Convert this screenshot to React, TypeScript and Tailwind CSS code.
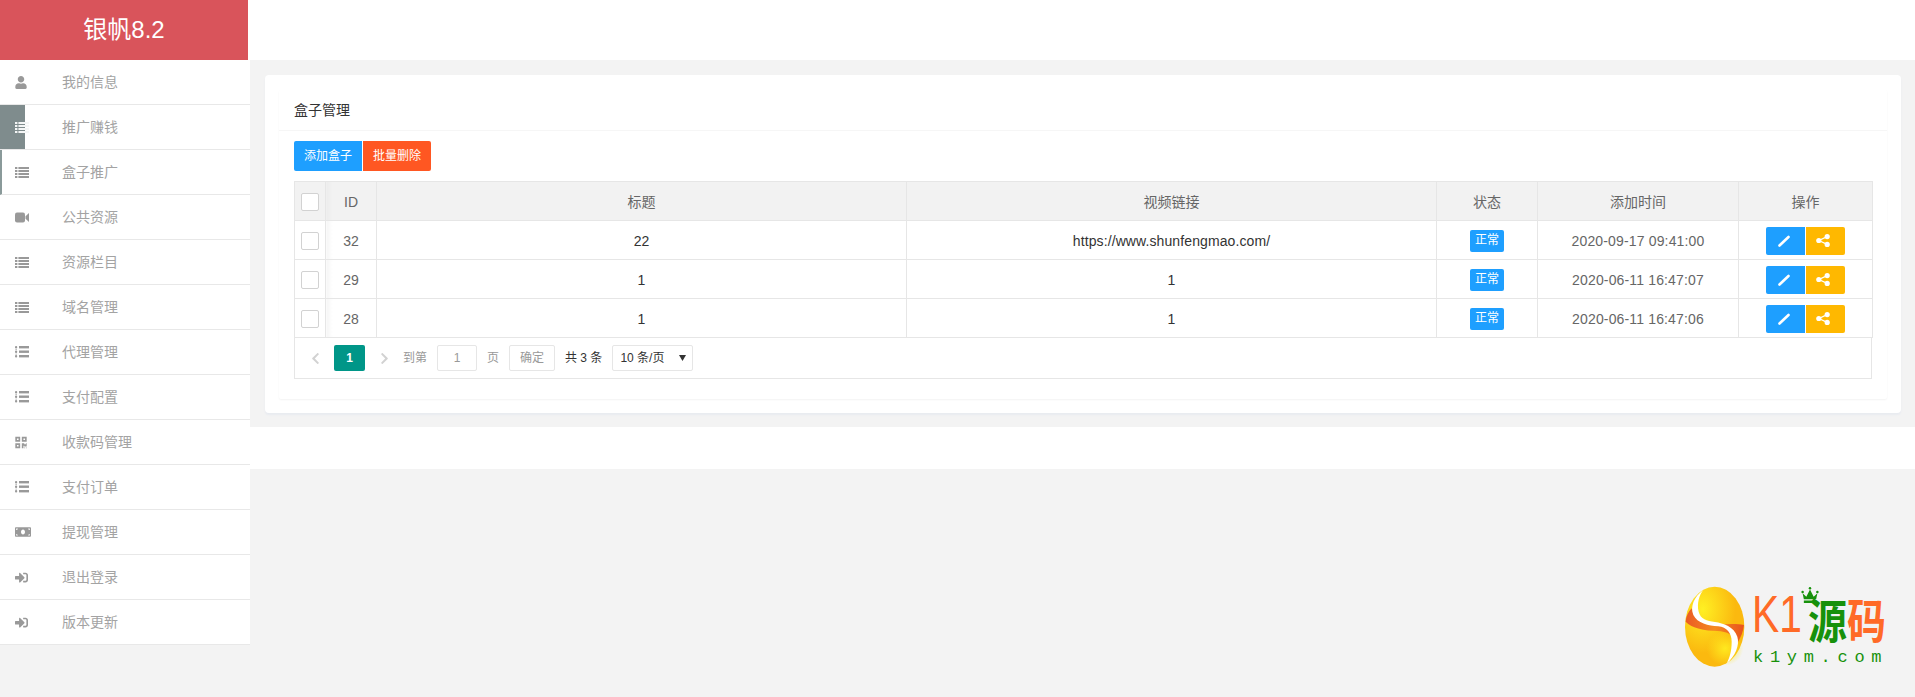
import React from "react";
import { FaUser, FaQrcode, FaMoneyBill, FaSignInAlt, FaChevronLeft, FaChevronRight } from "react-icons/fa";

const FONT = "font-['Liberation_Sans','Noto_Sans_CJK_SC',sans-serif]";

// font awesome 4 style list: four rows with small squares on the left
const ThinList = ({ className }: { className?: string }) => (
  <svg viewBox="0 0 14 11" fill="currentColor" className={`h-[11px] w-[14px] ${className ?? ""}`}>
    {[0, 3, 6, 9].map((y) => (
      <g key={y}>
        <rect x="0" y={y} width="2.4" height="2" />
        <rect x="3.4" y={y} width="10.6" height="2" />
      </g>
    ))}
  </svg>
);

const DotList = ({ className }: { className?: string }) => (
  <svg viewBox="0 0 14 12" fill="currentColor" className={`h-[12px] w-[14px] ${className ?? ""}`}>
    {[0, 4.5, 9].map((y) => (
      <g key={y}>
        <rect x="0" y={y} width="2.2" height="2.6" rx="1" />
        <rect x="4" y={y} width="10" height="2.4" />
      </g>
    ))}
    <rect x="0.6" y="3" width="1" height="1" />
    <rect x="0.6" y="7.6" width="1" height="1" />
  </svg>
);

const Camera = ({ className }: { className?: string }) => (
  <svg viewBox="0 0 14 11" fill="currentColor" className={`h-[11px] w-[14px] ${className ?? ""}`}>
    <rect x="0" y="0.5" width="10" height="10" rx="2" />
    <path d="M10.5 4.2 14 1v9l-3.5-3.2z" />
  </svg>
);

const User = ({ className }: { className?: string }) => <FaUser className={`h-[13px] w-[12px] ${className ?? ""}`} />;
const Qr = ({ className }: { className?: string }) => <FaQrcode className={`h-[13px] w-[12px] ${className ?? ""}`} />;
const Money = ({ className }: { className?: string }) => (
  <FaMoneyBill className={`h-[16px] w-[16px] ${className ?? ""}`} />
);
const SignIn = ({ className }: { className?: string }) => (
  <FaSignInAlt className={`h-[13px] w-[13px] ${className ?? ""}`} />
);

const menu = [
  { label: "我的信息", icon: User },
  { label: "推广赚钱", icon: ThinList },
  { label: "盒子推广", icon: ThinList },
  { label: "公共资源", icon: Camera },
  { label: "资源栏目", icon: ThinList },
  { label: "域名管理", icon: ThinList },
  { label: "代理管理", icon: DotList },
  { label: "支付配置", icon: DotList },
  { label: "收款码管理", icon: Qr },
  { label: "支付订单", icon: DotList },
  { label: "提现管理", icon: Money },
  { label: "退出登录", icon: SignIn },
  { label: "版本更新", icon: SignIn },
];

const rows = [
  { id: 32, title: "22", url: "https://www.shunfengmao.com/", time: "2020-09-17 09:41:00" },
  { id: 29, title: "1", url: "1", time: "2020-06-11 16:47:07" },
  { id: 28, title: "1", url: "1", time: "2020-06-11 16:47:06" },
];

const Checkbox = () => (
  <div className="mx-auto h-[18px] w-[18px] rounded-[2px] border border-[#d2d2d2] bg-white" />
);

const Sidebar = () => (
  <aside className="w-[250px] shrink-0">
    <div className="h-[60px] bg-white">
      <div className="flex h-full w-[248px] items-center justify-center bg-[#d9545b] text-2xl text-white">
        银帆8.2
      </div>
    </div>
    <ul className="bg-white">
      {menu.map((item, index) => {
        const Icon = item.icon;
        return (
          <li
            key={item.label}
            className={`relative flex h-[45px] items-center border-b border-[#e8e8e8] text-sm text-[#a3a3a3] ${
              index === 2 ? "border-l-2 border-l-[#8a9a9a] pl-[13px]" : "pl-[15px]"
            }`}
          >
            {index === 1 && <div className="absolute bottom-0 left-0 top-0 w-[25px] bg-[#7f8c8d]" />}
            <span className={`relative flex w-[47px] ${index === 1 ? "text-[#f4f6f6]" : "text-[#999999]"}`}>
              <Icon />
            </span>
            <span>{item.label}</span>
          </li>
        );
      })}
    </ul>
  </aside>
);

const Pagination = () => (
  <div className="flex h-[41px] items-center border border-t-0 border-[#e6e6e6] pl-[14px] text-xs text-[#666666]">
    <FaChevronLeft className="h-[13px] w-[13px] text-[#d2d2d2]" />
    <div className="ml-[12px] flex h-[26px] w-[31px] items-center justify-center rounded-[2px] bg-[#009688] font-bold text-white">
      1
    </div>
    <FaChevronRight className="ml-[13px] h-[13px] w-[13px] text-[#d2d2d2]" />
    <span className="ml-[12px] text-[#999999]">到第</span>
    <div className="ml-[10px] flex h-[26px] w-[40px] items-center justify-center rounded-[2px] border border-[#e6e6e6] text-[#999999]">
      1
    </div>
    <span className="ml-[10px] text-[#999999]">页</span>
    <div className="ml-[10px] flex h-[26px] w-[46px] items-center justify-center rounded-[2px] border border-[#e6e6e6] text-[#999999]">
      确定
    </div>
    <span className="ml-[10px] text-[#333333]">共 3 条</span>
    <div className="ml-[10px] flex h-[26px] w-[81px] items-center justify-between rounded-[2px] border border-[#e6e6e6] pl-[7px] pr-[5px] text-[#333333]">
      <span>10 条/页</span>
      <svg viewBox="0 0 8 6" className="h-[6px] w-[8px]">
        <path d="M0 0h7L3.5 6z" fill="#333333" />
      </svg>
    </div>
  </div>
);

const BoxTable = () => {
  const cell = "border border-[#e6e6e6] p-0 pt-px text-center";
  const idCell = `${cell} bg-[linear-gradient(90deg,#f5f5f5,#ffffff_6px)]`;
  return (
    <div>
      <table className="w-[1578px] table-fixed border-collapse text-sm text-[#666666]">
        <colgroup>
          <col className="w-[31px]" />
          <col className="w-[51px]" />
          <col className="w-[530px]" />
          <col className="w-[530px]" />
          <col className="w-[101px]" />
          <col className="w-[201px]" />
          <col className="w-[134px]" />
        </colgroup>
        <thead>
          <tr className="h-[39px] bg-[#f2f2f2]">
            <th className={`${cell} font-normal`}>
              <Checkbox />
            </th>
            <th className={`${cell} bg-[linear-gradient(90deg,#ececec,#f2f2f2_6px)] font-normal`}>ID</th>
            <th className={`${cell} font-normal`}>标题</th>
            <th className={`${cell} font-normal`}>视频链接</th>
            <th className={`${cell} font-normal`}>状态</th>
            <th className={`${cell} font-normal`}>添加时间</th>
            <th className={`${cell} font-normal`}>操作</th>
          </tr>
        </thead>
        <tbody>
          {rows.map((row) => (
            <tr key={row.id} className="h-[39px]">
              <td className={cell}>
                <Checkbox />
              </td>
              <td className={idCell}>{row.id}</td>
              <td className={`${cell} text-[#333333]`}>{row.title}</td>
              <td className={`${cell} tracking-[0.1px] text-[#333333]`}>{row.url}</td>
              <td className={cell}>
                <span className="inline-block h-[22px] w-[34px] rounded-[2px] bg-[#1e9fff] text-center text-xs leading-[20px] text-white">
                  正常
                </span>
              </td>
              <td className={`${cell} tracking-[0.15px]`}>{row.time}</td>
              <td className={cell}>
                <div className="flex justify-center gap-px pr-[1px]">
                  <div className="flex h-[28px] w-[39px] items-center justify-center rounded-l-[2px] bg-[#1e9fff] pr-[2px] text-white">
                    <svg viewBox="0 0 12 12" className="h-[12px] w-[12px]">
                      <path d="M1.5 10.5 10.5 2" stroke="#ffffff" strokeWidth="2.6" strokeLinecap="round" />
                    </svg>
                  </div>
                  <div className="flex h-[28px] w-[39px] items-center justify-center rounded-r-[2px] bg-[#ffb800] pr-[4px] text-white">
                    <svg viewBox="0 0 14 13" className="h-[13px] w-[14px]" fill="#ffffff">
                      <circle cx="2.8" cy="6.5" r="2.6" />
                      <circle cx="11.2" cy="2.6" r="2.6" />
                      <circle cx="11.2" cy="10.4" r="2.6" />
                      <path d="M2.8 6.5 11.2 2.6M2.8 6.5l8.4 3.9" stroke="#ffffff" strokeWidth="1.3" />
                    </svg>
                  </div>
                </div>
              </td>
            </tr>
          ))}
        </tbody>
      </table>
      <Pagination />
    </div>
  );
};

const Logo = () => (
  <div className="absolute left-[1680px] top-[580px] flex items-start">
    <svg viewBox="0 0 210 300" className="h-[100px] w-[70px]">
      <defs>
        <radialGradient id="eggA" cx="0.3" cy="0.28" r="0.55">
          <stop offset="0" stopColor="#fff023" />
          <stop offset="1" stopColor="#fbb90f" />
        </radialGradient>
        <radialGradient id="eggB" cx="0.5" cy="0.5" r="0.5">
          <stop offset="0" stopColor="#ffe91f" />
          <stop offset="1" stopColor="#ffe91f" stopOpacity="0" />
        </radialGradient>
        <linearGradient id="band" x1="0" y1="0" x2="1" y2="0">
          <stop offset="0" stopColor="#ea5a25" />
          <stop offset="0.5" stopColor="#f58a1f" />
          <stop offset="1" stopColor="#e9531f" />
        </linearGradient>
      </defs>
      <ellipse cx="104" cy="140" rx="89" ry="120" fill="url(#eggA)" />
      <ellipse cx="135" cy="205" rx="55" ry="52" fill="url(#eggB)" />
      <path
        d="M17 125C35 145 75 152 112 153C140 154 165 165 172 190C182 172 190 155 192 135C170 130 140 133 110 133C70 133 45 120 35 85C25 95 18 110 17 125Z"
        fill="url(#band)"
      />
      <path
        d="M70 30C42 50 30 80 40 105C52 130 85 137 115 139C140 141 155 160 155 185C155 215 148 235 140 250C165 230 180 195 172 170C162 140 130 130 105 126C80 122 62 118 56 95C50 70 58 45 70 30Z"
        fill="#ffffff"
      />
    </svg>
    <div className="relative ml-[5px] h-[100px] w-[140px]">
      <div className="absolute left-[-3px] top-[13px] origin-left scale-x-[0.8] text-[51px] leading-[44px] text-[#ff6a27]">
        K1
      </div>
      <div className="absolute left-[53px] top-[14px] flex origin-top scale-y-[1.2] font-['Noto_Sans_CJK_SC',sans-serif] text-[39px] font-bold leading-[40px]">
        <span className="text-[#17910b]">源</span>
        <span className="text-[#ff6a27]">码</span>
      </div>
      <svg viewBox="0 0 14 13" className="absolute left-[46px] top-[7px] h-[16px] w-[18px]" fill="#17910b">
        <path d="M1 5l3 3 3-6 3 6 3-3-1 5H2zM2 11h10v2H2z" />
        <circle cx="1" cy="4" r="1" />
        <circle cx="7" cy="1" r="1" />
        <circle cx="13" cy="4" r="1" />
      </svg>
      <div className="absolute left-[-2px] top-[68px] font-['Liberation_Mono',monospace] text-[17px] leading-[20px] tracking-[6.7px] text-[#17910b]">
        k1ym.com
      </div>
    </div>
  </div>
);

export default function App() {
  return (
    <div className={`relative flex min-h-[697px] overflow-hidden bg-[#f3f3f3] ${FONT}`}>
      <Sidebar />
      <main className="min-w-0 flex-1">
        <div className="h-[60px] bg-white" />
        <div className="pb-[14px] pl-[15px] pr-[14px] pt-[15px]">
          <div className="rounded-[4px] bg-white p-[14px] pt-[15px] shadow-[0_2px_2px_#e8ebf0]">
            <div className="rounded-[2px] bg-white shadow-[0_1px_2px_rgba(0,0,0,0.05)]">
              <div className="flex h-[41px] items-center border-b border-[#f6f6f6] pl-[15px] text-sm text-[#333333]">
                盒子管理
              </div>
              <div className="px-[15px] pb-[20px] pt-[10px]">
                <div className="mb-[10px] flex gap-px text-xs text-white">
                  <div className="flex h-[30px] w-[68px] items-center justify-center rounded-l-[2px] bg-[#1e9fff]">
                    添加盒子
                  </div>
                  <div className="flex h-[30px] w-[68px] items-center justify-center rounded-r-[2px] bg-[#ff5722]">
                    批量删除
                  </div>
                </div>
                <BoxTable />
              </div>
            </div>
          </div>
        </div>
        <div className="h-[42px] bg-white" />
      </main>
      <Logo />
    </div>
  );
}
